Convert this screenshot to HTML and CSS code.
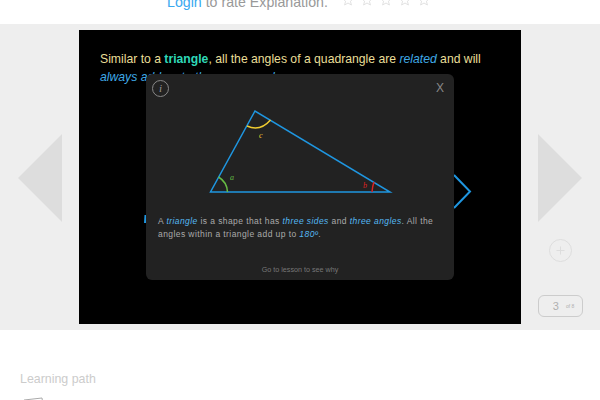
FILE: index.html
```html
<!DOCTYPE html>
<html>
  <head>
    <meta charset="utf-8">
    <title>Explanation</title>
    <link rel="stylesheet" href="styles.css">
  </head>
  <body>
    <div class="rating">
      <span class="rating-text"><a href="#">Login</a> to rate Explanation.</span>
      <span class="stars">
        <svg class="star" viewBox="0 0 12 12"><path d="M6 .8 7.5 4.4 11.4 4.7 8.4 7.2 9.4 11 6 9 2.6 11 3.6 7.2.6 4.7 4.5 4.4Z"/></svg>
        <svg class="star" viewBox="0 0 12 12"><path d="M6 .8 7.5 4.4 11.4 4.7 8.4 7.2 9.4 11 6 9 2.6 11 3.6 7.2.6 4.7 4.5 4.4Z"/></svg>
        <svg class="star" viewBox="0 0 12 12"><path d="M6 .8 7.5 4.4 11.4 4.7 8.4 7.2 9.4 11 6 9 2.6 11 3.6 7.2.6 4.7 4.5 4.4Z"/></svg>
        <svg class="star" viewBox="0 0 12 12"><path d="M6 .8 7.5 4.4 11.4 4.7 8.4 7.2 9.4 11 6 9 2.6 11 3.6 7.2.6 4.7 4.5 4.4Z"/></svg>
        <svg class="star" viewBox="0 0 12 12"><path d="M6 .8 7.5 4.4 11.4 4.7 8.4 7.2 9.4 11 6 9 2.6 11 3.6 7.2.6 4.7 4.5 4.4Z"/></svg>
      </span>
    </div>

    <section class="stage">
      <div class="side side-left">
        <svg class="arrow" width="44" height="88" viewBox="0 0 44 88"><path d="M44 0V88L0 44Z"/></svg>
      </div>

      <div class="slide">
        <p class="slide-text">Similar to a <b class="term">triangle</b>, all the angles of a quadrangle are <i>related</i> and will <i>always add up to the same number.</i></p>
        <svg class="slide-mark" width="4" height="10" viewBox="0 0 4 10"><path d="M2.500 1 2 9"/></svg>
        <svg class="slide-next" width="20" height="36" viewBox="0 0 20 36"><path d="M1 1 17 17.500 1 34" /></svg>

        <div class="modal">
          <span class="info">i</span>
          <span class="close">X</span>
          <svg class="diagram" width="308" height="130" viewBox="0 0 308 130">
            <path class="tri" d="M64.500 118H244L109 37Z"/>
            <path class="ang-a" d="M72.500 103Q81 108 81.500 118"/>
            <path class="ang-b" d="M226 118Q226.500 112 228 108"/>
            <path class="ang-c" d="M101 52Q114 58 124.500 46"/>
            <text class="lbl-a" x="84" y="106">a</text>
            <text class="lbl-b" x="217" y="114">b</text>
            <text class="lbl-c" x="113" y="64">c</text>
          </svg>
          <p class="modal-text">A <i>triangle</i> is a shape that has <i>three sides</i> and <i>three angles</i>. All the angles within a triangle add up to <i>180º</i>.</p>
          <p class="modal-link">Go to lesson to see why</p>
        </div>
      </div>

      <div class="side side-right">
        <svg class="arrow" width="44" height="88" viewBox="0 0 44 88"><path d="M0 0V88L44 44Z"/></svg>
        <svg class="add" width="23" height="23" viewBox="0 0 23 23">
          <circle cx="11.500" cy="11.500" r="11"/>
          <path d="M7.500 11.500H15.500M11.500 7.500V15.500"/>
        </svg>
        <span class="pager"><span class="pager-num">3</span><span class="pager-of">of 8</span></span>
      </div>
    </section>

    <section class="path">
      <h2>Learning path</h2>
      <svg class="path-icon" width="26" height="8" viewBox="0 0 26 8"><path d="M1 3 19 1 20 8M2 3V8"/></svg>
    </section>
  </body>
</html>
```

FILE: styles.css
```css
html, body {
  margin: 0;
  padding: 0;
}

body {
  width: 600px;
  height: 400px;
  overflow: hidden;
  background: #fff;
  font-family: "Liberation Sans", Arial, sans-serif;
}

.rating {
  height: 24px;
  overflow: hidden;
  display: flex;
  align-items: flex-end;
  padding-left: 167px;
  box-sizing: border-box;
}

.rating-text {
  font-size: 14.200px;
  line-height: 17px;
  color: #999;
  margin-bottom: 13px;
}

.rating-text a {
  color: #39a9f0;
  text-decoration: none;
}

.stars {
  display: flex;
  gap: 7px;
  margin-left: 14px;
  margin-bottom: 18px;
}

.star {
  width: 12px;
  height: 12px;
  fill: none;
  stroke: #e2e2e2;
  stroke-width: 1;
}

.stage {
  height: 306px;
  background: #eee;
  display: flex;
  justify-content: center;
  padding-top: 6px;
  box-sizing: border-box;
}

.side {
  width: 79px;
  display: flex;
  flex-direction: column;
  align-items: center;
}

.arrow {
  fill: #ddd;
  margin-top: 104px;
}

.side-left .arrow {
  margin-left: 1px;
}

.side-right .arrow {
  margin-right: 1px;
}

.add {
  margin-top: 17px;
  fill: none;
  stroke: #ddd;
}

.pager {
  width: 37px;
  height: 20px;
  margin-top: 33px;
  padding-left: 6px;
  border: 1px solid #ccc;
  border-radius: 6px;
  display: flex;
  align-items: center;
  justify-content: center;
  gap: 7px;
  color: #b0b0b0;
}

.pager-num {
  font-size: 11px;
}

.pager-of {
  font-size: 5px;
}

.slide {
  width: 442px;
  height: 294px;
  background: #000;
  position: relative;
  padding: 20px 21px;
  box-sizing: border-box;
}

.slide-text {
  margin: 0;
  font-size: 12.200px;
  line-height: 18px;
  color: #eadf98;
}

.slide-text i {
  color: #3fa9e6;
}

.term {
  color: #2fd8b8;
}

.slide-mark {
  position: absolute;
  left: 64px;
  top: 184px;
  fill: none;
  stroke: #1f96e0;
  stroke-width: 2;
}

.slide-next {
  position: absolute;
  left: 374px;
  top: 144px;
  fill: none;
  stroke: #1f96e0;
  stroke-width: 2;
}

.modal {
  position: absolute;
  left: 67px;
  top: 44px;
  width: 308px;
  height: 206px;
  background: #222;
  border-radius: 6px;
}

.info {
  position: absolute;
  left: 6px;
  top: 6px;
  width: 15px;
  height: 15px;
  border: 1px solid #888;
  border-radius: 50%;
  color: #999;
  font-family: "Liberation Serif", serif;
  font-size: 11px;
  font-style: italic;
  line-height: 15px;
  text-align: center;
}

.close {
  position: absolute;
  left: 290px;
  top: 7px;
  color: #888;
  font-size: 12px;
}

.diagram {
  display: block;
}

.tri {
  fill: none;
  stroke: #1f96e0;
  stroke-width: 1.500;
}

.ang-a, .ang-b, .ang-c {
  fill: none;
  stroke-width: 1.500;
}

.ang-a { stroke: #66bb44; }
.ang-b { stroke: #d22; }
.ang-c { stroke: #f0cc30; }

.diagram text {
  font-family: "Liberation Serif", serif;
  font-size: 8px;
  font-style: italic;
}

.lbl-a { fill: #66bb44; }
.lbl-b { fill: #d22; }
.lbl-c { fill: #f0cc30; }

.modal-text {
  margin: 11px 0 0;
  padding: 0 12px;
  font-size: 8.500px;
  line-height: 13.400px;
  letter-spacing: 0.420px;
  color: #aaa;
}

.modal-text i {
  color: #55b8f2;
}

.modal-link {
  position: absolute;
  left: 0;
  right: 0;
  bottom: 6px;
  margin: 0;
  font-size: 7.200px;
  text-align: center;
  color: #777;
}

.path {
  padding: 42px 20px 0;
}

.path h2 {
  margin: 0;
  font-size: 12.400px;
  font-weight: normal;
  line-height: 14px;
  color: #ccc;
}

.path-icon {
  display: block;
  margin-top: 11px;
  margin-left: 3px;
  fill: none;
  stroke: #aaa;
}
```
